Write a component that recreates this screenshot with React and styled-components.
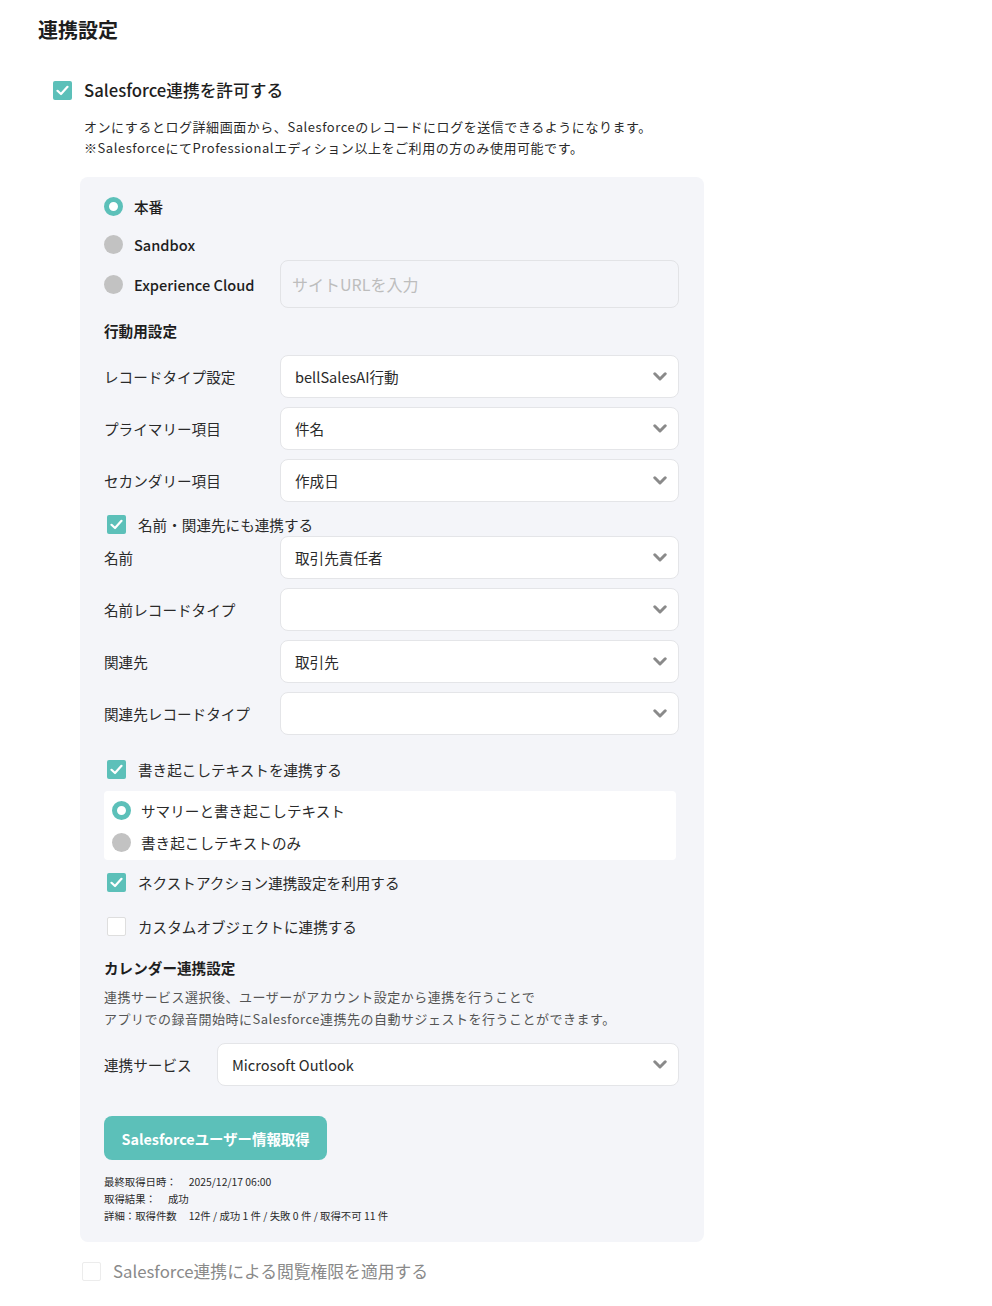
import styled, { createGlobalStyle } from "styled-components";

const teal = "#5cc0b9";

const GlobalStyle = createGlobalStyle`
  body {
    margin: 0;
    background: #ffffff;
    font-family: "Noto Sans CJK JP", "Noto Sans", sans-serif;
    color: #222;
  }
`;

function CheckIcon() {
  return (
    <svg width="13" height="11" viewBox="0 0 13 11">
      <path
        d="M1.5 5.8 L5 9 L11.5 1.8"
        fill="none"
        stroke="#fff"
        strokeWidth="2.2"
        strokeLinecap="round"
        strokeLinejoin="round"
      />
    </svg>
  );
}

function Chevron() {
  return (
    <svg width="14" height="9" viewBox="0 0 14 9">
      <path
        d="M1.8 1.8 L7 7 L12.2 1.8"
        fill="none"
        stroke="#8a8a8a"
        strokeWidth="3"
        strokeLinecap="round"
        strokeLinejoin="round"
      />
    </svg>
  );
}

function Checkbox({ checked, faint }) {
  return <Box $checked={checked} $faint={faint}>{checked && <CheckIcon />}</Box>;
}

function SelectBox({ value }) {
  return (
    <Select>
      <span>{value}</span>
      <Chevron />
    </Select>
  );
}

function FieldRow({ label, value, labelWidth }) {
  return (
    <Row>
      <RowLabel $width={labelWidth}>{label}</RowLabel>
      <SelectBox value={value} />
    </Row>
  );
}

export default function App() {
  return (
    <Page>
      <GlobalStyle />
      <Title>連携設定</Title>

      <MainCheck>
        <Checkbox checked />
        <span>Salesforce連携を許可する</span>
      </MainCheck>
      <Description>
        オンにするとログ詳細画面から、Salesforceのレコードにログを送信できるようになります。
        <br />
        ※SalesforceにてProfessionalエディション以上をご利用の方のみ使用可能です。
      </Description>

      <Panel>
        <RadioRow>
          <Radio $checked />
          <RadioLabel>本番</RadioLabel>
        </RadioRow>
        <RadioRow>
          <Radio />
          <RadioLabel>Sandbox</RadioLabel>
        </RadioRow>
        <RadioRow $tall>
          <Radio />
          <RadioLabel $width={146}>Experience Cloud</RadioLabel>
          <UrlInput>サイトURLを入力</UrlInput>
        </RadioRow>

        <SectionTitle $top={12}>行動用設定</SectionTitle>
        <Rows $top={13}>
          <FieldRow label="レコードタイプ設定" value="bellSalesAI行動" />
          <FieldRow label="プライマリー項目" value="件名" />
          <FieldRow label="セカンダリー項目" value="作成日" />
        </Rows>

        <InnerCheck $top={11}>
          <Checkbox checked />
          <span>名前・関連先にも連携する</span>
        </InnerCheck>
        <Rows $top={1}>
          <FieldRow label="名前" value="取引先責任者" />
          <FieldRow label="名前レコードタイプ" value="" />
          <FieldRow label="関連先" value="取引先" />
          <FieldRow label="関連先レコードタイプ" value="" />
        </Rows>

        <InnerCheck $top={23}>
          <Checkbox checked />
          <span>書き起こしテキストを連携する</span>
        </InnerCheck>
        <WhiteBox>
          <SubRadio>
            <Radio $checked />
            <span>サマリーと書き起こしテキスト</span>
          </SubRadio>
          <SubRadio>
            <Radio />
            <span>書き起こしテキストのみ</span>
          </SubRadio>
        </WhiteBox>

        <InnerCheck $top={11}>
          <Checkbox checked />
          <span>ネクストアクション連携設定を利用する</span>
        </InnerCheck>
        <InnerCheck $top={22}>
          <Checkbox />
          <span>カスタムオブジェクトに連携する</span>
        </InnerCheck>

        <SectionTitle $top={20}>カレンダー連携設定</SectionTitle>
        <CalendarText>
          連携サービス選択後、ユーザーがアカウント設定から連携を行うことで
          <br />
          アプリでの録音開始時にSalesforce連携先の自動サジェストを行うことができます。
        </CalendarText>
        <Rows $top={13}>
          <FieldRow label="連携サービス" value="Microsoft Outlook" labelWidth={113} />
        </Rows>

        <FetchButton>Salesforceユーザー情報取得</FetchButton>
        <InfoText>
          <div>
            最終取得日時：<Gap />2025/12/17 06:00
          </div>
          <div>
            取得結果：<Gap />成功
          </div>
          <div>
            詳細：取得件数<Gap />12件 / 成功 1 件 / 失敗 0 件 / 取得不可 11 件
          </div>
        </InfoText>
      </Panel>

      <BottomCheck>
        <Checkbox faint />
        <span>Salesforce連携による閲覧権限を適用する</span>
      </BottomCheck>
    </Page>
  );
}

const Page = styled.div`
  padding: 16px 0 20px 38px;
  width: 666px;
`;

const Title = styled.h1`
  margin: 0;
  font-size: 20px;
  line-height: 28px;
  font-weight: 700;
  color: #1e1e1e;
`;

const MainCheck = styled.label`
  display: flex;
  align-items: center;
  gap: 12px;
  margin: 34px 0 0 15px;
  height: 24px;
  font-size: 16.7px;
  font-weight: 500;
  color: #1e1e1e;
`;

const Box = styled.span`
  flex: none;
  display: flex;
  align-items: center;
  justify-content: center;
  width: 19px;
  height: 19px;
  box-sizing: border-box;
  border-radius: 2px;
  background: ${(p) => (p.$checked ? teal : "#fff")};
  border: ${(p) => (p.$checked ? "none" : p.$faint ? "1px solid #ececec" : "1px solid #dedede")};
`;

const Description = styled.p`
  margin: 14px 0 0 46px;
  font-size: 13px;
  line-height: 21px;
  letter-spacing: 0.55px;
  color: #2a2a2a;
`;

const Panel = styled.section`
  margin: 19px 0 0 42px;
  width: 624px;
  box-sizing: border-box;
  padding: 10px 25px 18px 24px;
  background: #f4f5f9;
  border-radius: 8px;
`;

const RadioRow = styled.div`
  display: flex;
  align-items: center;
  height: ${(p) => (p.$tall ? "48px" : "38px")};
  margin-top: ${(p) => (p.$tall ? "-3px" : "0")};
`;

const Radio = styled.span`
  flex: none;
  width: 19px;
  height: 19px;
  box-sizing: border-box;
  border-radius: 50%;
  background: ${(p) => (p.$checked ? "#fff" : "#c2c2c2")};
  border: ${(p) => (p.$checked ? `5px solid ${teal}` : "none")};
`;

const RadioLabel = styled.span`
  margin-left: 11px;
  width: ${(p) => (p.$width ? `${p.$width}px` : "auto")};
  font-size: 14.6px;
  font-weight: 500;
  color: #1e1e1e;
`;

const UrlInput = styled.div`
  flex: 1;
  height: 48px;
  box-sizing: border-box;
  display: flex;
  align-items: center;
  padding-left: 11px;
  border: 1px solid #e2e3e6;
  border-radius: 8px;
  background: #f4f5f9;
  font-size: 16px;
  color: #bdbdbd;
`;

const SectionTitle = styled.h2`
  margin: ${(p) => p.$top}px 0 0;
  font-size: 14.6px;
  line-height: 22px;
  font-weight: 700;
  color: #1e1e1e;
`;

const Rows = styled.div`
  display: flex;
  flex-direction: column;
  gap: 9px;
  margin-top: ${(p) => p.$top}px;
`;

const Row = styled.div`
  display: flex;
  align-items: center;
`;

const RowLabel = styled.span`
  flex: none;
  width: ${(p) => p.$width || 176}px;
  font-size: 14.6px;
  color: #2a2a2a;
`;

const Select = styled.div`
  flex: 1;
  height: 43px;
  box-sizing: border-box;
  display: flex;
  align-items: center;
  justify-content: space-between;
  padding: 0 11px 0 14px;
  background: #fff;
  border: 1px solid #e4e5e8;
  border-radius: 8px;
  font-size: 14.6px;
  color: #2a2a2a;
`;

const InnerCheck = styled.label`
  display: flex;
  align-items: center;
  gap: 12px;
  height: 22px;
  margin-top: ${(p) => p.$top}px;
  padding-left: 3px;
  font-size: 14.6px;
  color: #2a2a2a;
`;

const WhiteBox = styled.div`
  margin-top: 11px;
  width: 572px;
  box-sizing: border-box;
  padding: 3px 8px 2px;
  background: #fff;
  border-radius: 4px;
`;

const SubRadio = styled.div`
  display: flex;
  align-items: center;
  gap: 10px;
  height: 32px;
  font-size: 14.6px;
  color: #2a2a2a;
`;

const CalendarText = styled.p`
  margin: 7px 0 0;
  font-size: 13px;
  line-height: 22px;
  letter-spacing: 0.5px;
  color: #555;
`;

const FetchButton = styled.button`
  display: block;
  margin-top: 30px;
  width: 223px;
  height: 44px;
  border: none;
  border-radius: 8px;
  background: ${teal};
  color: #fff;
  font-family: "Noto Sans CJK JP", "Noto Sans", sans-serif;
  font-size: 14.4px;
  font-weight: 700;
  cursor: pointer;
`;

const InfoText = styled.div`
  margin-top: 13px;
  font-size: 10.4px;
  line-height: 17px;
  color: #2a2a2a;
`;

const Gap = styled.span`
  display: inline-block;
  width: 12px;
`;

const BottomCheck = styled.label`
  display: flex;
  align-items: center;
  gap: 12px;
  height: 22px;
  margin: 18px 0 0 44px;
  font-size: 16.8px;
  color: #8a8a8a;
`;
